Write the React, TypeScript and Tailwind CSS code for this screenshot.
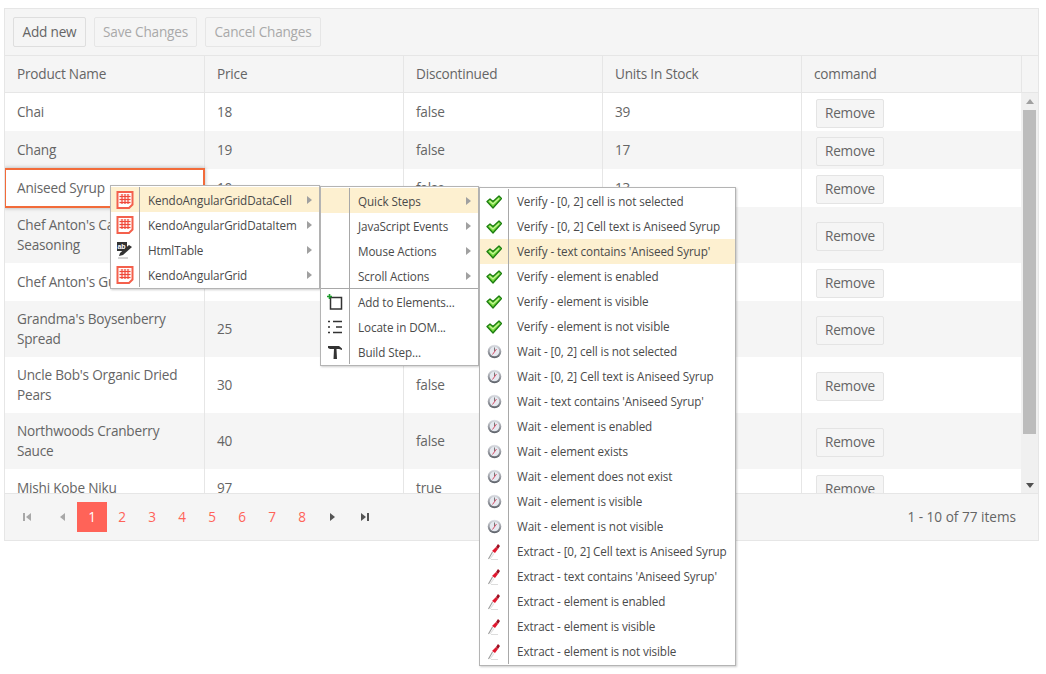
import React from 'react';

const rows = [
    { name: ['Chai'], price: '18', disc: 'false', stock: '39', h: 'h-[38px]' },
    { name: ['Chang'], price: '19', disc: 'false', stock: '17', h: 'h-[38px]' },
    { name: ['Aniseed Syrup'], price: '10', disc: 'false', stock: '13', h: 'h-[38px]' },
    { name: ["Chef Anton's Cajun", 'Seasoning'], price: '22', disc: 'false', stock: '53', h: 'h-[56px]' },
    { name: ["Chef Anton's Gumbo Mix"], price: '21.35', disc: 'true', stock: '0', h: 'h-[38px]' },
    { name: ["Grandma's Boysenberry", 'Spread'], price: '25', disc: 'false', stock: '120', h: 'h-[56px]' },
    { name: ["Uncle Bob's Organic Dried", 'Pears'], price: '30', disc: 'false', stock: '15', h: 'h-[56px]' },
    { name: ['Northwoods Cranberry', 'Sauce'], price: '40', disc: 'false', stock: '6', h: 'h-[56px]' },
    { name: ['Mishi Kobe Niku'], price: '97', disc: 'true', stock: '29', h: 'h-[38px]' },
];

const Arrow = ({ d, fill = '#8a8a8a' }: { d: string; fill?: string }) => (
    <svg width="10" height="10" viewBox="0 0 10 10">
        <path d={d} fill={fill} />
    </svg>
);

const KendoIcon = () => (
    <svg width="20" height="20" viewBox="0 0 20 20">
        <path d="M2.500 2h15v12.500L14 18H2.500z" fill="#fff" stroke="#f4604c" strokeWidth="2" />
        <rect x="4.500" y="4" width="11" height="10" fill="#fde3de" />
        <path d="M7 4v10M10 4v10M13 4v10M4.500 6.500h11M4.500 9.500h11M4.500 12.500h11" stroke="#f0483a" strokeWidth="1.200" fill="none" />
    </svg>
);

const TableIcon = () => (
    <svg width="18" height="18" viewBox="0 0 18 18">
        <rect x="1" y="1" width="10" height="9" fill="#333" />
        <text x="1.500" y="8" fontSize="7" fontWeight="700" fill="#fff" fontFamily="Liberation Sans, sans-serif">ab</text>
        <path d="M3 15l1-3 9-8 3 2-9 8z" fill="#333" />
        <path d="M2 17h10" stroke="#aaa" />
    </svg>
);

const CheckIcon = () => (
    <svg width="16" height="14" viewBox="0 0 16 14">
        <path d="M1 6.500l3-2.500 3 2.500L13 1l2.500 2.500L7 13z" fill="#72d83a" stroke="#1c7d10" strokeWidth="1.300" strokeLinejoin="round" />
        <path d="M3.500 6l3.500 3 6-5.500" stroke="#c8f59a" strokeWidth="1.100" fill="none" />
    </svg>
);

const WaitIcon = () => (
    <svg width="15" height="15" viewBox="0 0 15 15">
        <defs>
            <linearGradient id="waitRim" x1="0" y1="0" x2="0" y2="1">
                <stop offset="0" stopColor="#e2e4ea" />
                <stop offset="1" stopColor="#5a5e66" />
            </linearGradient>
        </defs>
        <circle cx="7.500" cy="7.500" r="6.800" fill="url(#waitRim)" />
        <circle cx="7.500" cy="7.500" r="4.800" fill="#e6e9f0" />
        <path d="M7.500 3.500v4" stroke="#777" strokeWidth="1" />
        <path d="M9.500 5l-4 5.500" stroke="#d8506a" strokeWidth="1" />
    </svg>
);

const ExtractIcon = () => (
    <svg width="16" height="18" viewBox="0 0 16 18">
        <path d="M2.500 16l4-7" stroke="#999" strokeWidth="1.100" fill="none" />
        <path d="M4 16l4-5.500" stroke="#e2e2e2" strokeWidth="1.200" fill="none" />
        <path d="M6 8l4-4 2 2-3 4z" fill="#e0182e" />
        <path d="M10 4l2-3 2 2-2 3z" fill="#9a1022" />
        <path d="M5 16.500h7" stroke="#ddd" />
    </svg>
);

const AddIcon = () => (
    <svg width="16" height="16" viewBox="0 0 16 16">
        <rect x="3.500" y="3.500" width="11" height="11.500" fill="#fff" stroke="#333" strokeWidth="1.500" />
        <path d="M2.500 0v5M0 2.500h5" stroke="#1c9a2b" strokeWidth="1.600" />
    </svg>
);

const DomIcon = () => (
    <svg width="16" height="16" viewBox="0 0 16 16">
        <path d="M1 2.500h2M6 2.500h9M1 8h2M9 8h6M1 13.500h2M6 13.500h9" stroke="#333" strokeWidth="1.500" />
    </svg>
);

const HammerIcon = () => (
    <svg width="16" height="16" viewBox="0 0 16 16">
        <path d="M1 2h11l3 2.500V6l-3-1H9.500l.5 10H6.500L7 5H3L1 4z" fill="#333" />
    </svg>
);

const right = 'M3 1l5 4-5 4z';

const menu1: [React.ReactNode, string][] = [
    [<KendoIcon />, 'KendoAngularGridDataCell'],
    [<KendoIcon />, 'KendoAngularGridDataItem'],
    [<TableIcon />, 'HtmlTable'],
    [<KendoIcon />, 'KendoAngularGrid'],
];

const menu3: [string, string][] = [
    ['check', 'Verify - [0, 2] cell is not selected'],
    ['check', 'Verify - [0, 2] Cell text is Aniseed Syrup'],
    ['check', "Verify - text contains 'Aniseed Syrup'"],
    ['check', 'Verify - element is enabled'],
    ['check', 'Verify - element is visible'],
    ['check', 'Verify - element is not visible'],
    ['wait', 'Wait - [0, 2] cell is not selected'],
    ['wait', 'Wait - [0, 2] Cell text is Aniseed Syrup'],
    ['wait', "Wait - text contains 'Aniseed Syrup'"],
    ['wait', 'Wait - element is enabled'],
    ['wait', 'Wait - element exists'],
    ['wait', 'Wait - element does not exist'],
    ['wait', 'Wait - element is visible'],
    ['wait', 'Wait - element is not visible'],
    ['extract', 'Extract - [0, 2] Cell text is Aniseed Syrup'],
    ['extract', "Extract - text contains 'Aniseed Syrup'"],
    ['extract', 'Extract - element is enabled'],
    ['extract', 'Extract - element is visible'],
    ['extract', 'Extract - element is not visible'],
];

const MenuRow = ({ icon, label, arrow, active, raised }: { icon?: React.ReactNode; label: string; arrow?: boolean; active?: boolean; raised?: boolean }) => (
    <div className={`flex h-[25px] items-center ${active ? 'bg-[#fdf0d0]' : ''}`}>
        <div className="flex h-full w-[28px] shrink-0 items-center justify-center">{icon}</div>
        <div className="h-full w-px shrink-0 bg-[#a8a8a8]" />
        <span className={`ml-2 flex-1 whitespace-nowrap ${raised ? 'pb-0.5' : ''}`}>{label}</span>
        {arrow && (
            <span className="mr-[5px] flex">
                <Arrow d={right} fill="#a0a0a0" />
            </span>
        )}
    </div>
);

const Cell = ({ children, last }: { children: React.ReactNode; last?: boolean }) => (
    <div className={`flex items-center px-3 ${last ? '' : 'border-r border-[#e6e6e6]'}`}>{children}</div>
);

const RemoveButton = () => (
    <button className="h-[29px] w-[68px] rounded-[2px] border border-[#e4e4e4] bg-[#f5f5f5] text-[#656565]">Remove</button>
);

export default function App() {
    return (
        <div className="relative h-[674px] w-[1046px] overflow-hidden bg-white pl-1 pt-2 font-['Open_Sans',sans-serif] text-[13.6px] leading-5 tracking-[-0.2px] text-[#656565]">
            {/* Grid */}
            <div className="flex h-[533px] w-[1035px] flex-col border border-[#e6e6e6]">
                <div className="flex h-[47px] shrink-0 items-center gap-2 border-b border-[#e6e6e6] bg-[#f5f5f5] px-2">
                    <button className="h-[30px] w-[73px] rounded-[2px] border border-[#dedede] bg-[#f5f5f5] pb-px">Add new</button>
                    <button className="h-[30px] w-[103px] rounded-[2px] border border-[#e6e6e6] pb-px text-[#a9a9a9]">Save Changes</button>
                    <button className="h-[30px] w-[116px] rounded-[2px] border border-[#e6e6e6] pb-px text-[#a9a9a9]">Cancel Changes</button>
                </div>

                <div className="grid h-[37px] shrink-0 grid-cols-[200px_199px_199px_199px_220px_1fr] border-b border-[#e6e6e6] bg-[#f5f5f5]">
                    <Cell>Product Name</Cell>
                    <Cell>Price</Cell>
                    <Cell>Discontinued</Cell>
                    <Cell>Units In Stock</Cell>
                    <Cell>command</Cell>
                    <div />
                </div>

                <div className="flex h-[400px] shrink-0">
                    <div className="flex-1 overflow-hidden">
                        {rows.map((row, i) => (
                            <div
                                key={row.name[0]}
                                className={`grid grid-cols-[200px_199px_199px_199px_220px] ${row.h} ${i % 2 === 1 ? 'bg-[#f5f5f5]' : 'bg-white'}`}
                            >
                                {i === 2 ? (
                                    <div className="relative z-10 -my-px -ml-px flex items-center border-2 border-[#f26b3a] bg-white px-[11px] shadow-[0_0_4px_rgba(0,0,0,0.3)]">
                                        {row.name[0]}
                                    </div>
                                ) : (
                                    <Cell>
                                        <div>
                                            {row.name.map((line) => (
                                                <div key={line} className="whitespace-nowrap">{line}</div>
                                            ))}
                                        </div>
                                    </Cell>
                                )}
                                <Cell>{row.price}</Cell>
                                <Cell>{row.disc}</Cell>
                                <Cell>{row.stock}</Cell>
                                <div className="flex items-center pl-[14px] pt-0.5">
                                    <RemoveButton />
                                </div>
                            </div>
                        ))}
                    </div>
                    {/* Scrollbar */}
                    <div className="flex w-[17px] shrink-0 flex-col items-center bg-[#f0f0f0]">
                        <div className="flex h-[17px] items-center justify-center">
                            <Arrow d="M5 2l4 5H1z" fill="#a0a0a0" />
                        </div>
                        <div className="h-[324px] w-[13px] bg-[#bcbcbc]" />
                        <div className="flex-1" />
                        <div className="flex h-[17px] items-center justify-center">
                            <Arrow d="M5 8L1 3h8z" fill="#505050" />
                        </div>
                    </div>
                </div>

                <div className="flex flex-1 items-center justify-between border-t border-[#e6e6e6] bg-[#f5f5f5] pl-[7px] pr-[22px]">
                    <div className="flex items-center">
                        <span className="flex h-[30px] w-[30px] items-center justify-center"><Arrow d="M1 1h2v8H1zM9 1v8L4 5z" fill="#a8a8a8" /></span>
                        <span className="ml-[5px] flex h-[30px] w-[30px] items-center justify-center"><Arrow d="M8 1v8L3 5z" fill="#a8a8a8" /></span>
                        <span className="flex h-[30px] w-[30px] items-center justify-center bg-[#ff6358] text-white">1</span>
                        {['2', '3', '4', '5', '6', '7', '8'].map((n) => (
                            <span key={n} className="flex h-[30px] w-[30px] items-center justify-center text-[#ff6358]">{n}</span>
                        ))}
                        <span className="flex h-[30px] w-[30px] items-center justify-center"><Arrow d={right} fill="#555" /></span>
                        <span className="ml-[3px] flex h-[30px] w-[30px] items-center justify-center"><Arrow d="M1 1l5 4-5 4zM7 1h2v8H7z" fill="#555" /></span>
                    </div>
                    <span className="tracking-normal">1 - 10 of 77 items</span>
                </div>
            </div>

            {/* Context menus */}
            <div className="absolute left-[110px] top-[185px] z-20 w-[210px] border border-[#b4b4b4] bg-white py-px text-[11.7px] tracking-[-0.1px] text-[#4a4a4a] shadow-[1px_1px_2px_rgba(0,0,0,0.2)]">
                {menu1.map(([icon, label], i) => (
                    <MenuRow key={label} icon={icon} label={label} arrow active={i === 0} />
                ))}
            </div>

            <div className="absolute left-[320px] top-[186px] z-20 w-[159px] border border-[#b4b4b4] bg-white py-px text-[11.7px] tracking-[-0.1px] text-[#4a4a4a] shadow-[1px_1px_2px_rgba(0,0,0,0.2)]">
                <MenuRow label="Quick Steps" arrow active />
                <MenuRow label="JavaScript Events" arrow />
                <MenuRow label="Mouse Actions" arrow />
                <MenuRow label="Scroll Actions" arrow />
                <div className="h-px bg-[#a8a8a8]" />
                <MenuRow icon={<AddIcon />} label="Add to Elements..." />
                <MenuRow icon={<DomIcon />} label="Locate in DOM..." />
                <MenuRow icon={<HammerIcon />} label="Build Step..." />
            </div>

            <div className="absolute left-[479px] top-[187px] z-20 w-[257px] border border-[#b4b4b4] bg-white py-px text-[11.7px] tracking-[-0.1px] text-[#4a4a4a] shadow-[1px_1px_2px_rgba(0,0,0,0.2)]">
                {menu3.map(([kind, label], i) => (
                    <MenuRow
                        key={label}
                        icon={kind === 'check' ? <CheckIcon /> : kind === 'wait' ? <WaitIcon /> : <ExtractIcon />}
                        label={label}
                        active={i === 2}
                        raised
                    />
                ))}
            </div>
        </div>
    );
}
